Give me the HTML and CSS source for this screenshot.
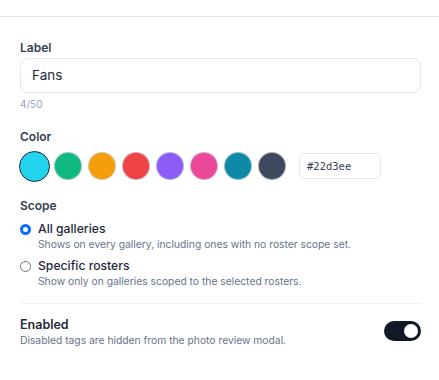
FILE: index.html
```html
<!DOCTYPE html>
<html>
<head>
<meta charset="utf-8">
<link rel="stylesheet" href="styles.css">
</head>
<body>
<div class="topbar"></div>
<div class="content">
  <div class="field">
    <div class="label">Label</div>
    <div class="input">Fans</div>
    <div class="counter">4/50</div>
  </div>

  <div class="field color-field">
    <div class="label">Color</div>
    <div class="swatch-row">
      <span class="swatch selected" style="background:#22d3ee"></span>
      <span class="swatch" style="background:#10b981"></span>
      <span class="swatch" style="background:#f59e0b"></span>
      <span class="swatch" style="background:#ef4444"></span>
      <span class="swatch" style="background:#8b5cf6"></span>
      <span class="swatch" style="background:#ec4899"></span>
      <span class="swatch" style="background:#0e89a8"></span>
      <span class="swatch" style="background:#3d4a5e"></span>
      <div class="hex">#22d3ee</div>
    </div>
  </div>

  <div class="field scope-field">
    <div class="label">Scope</div>
    <div class="radio-option">
      <span class="radio checked"></span>
      <div class="radio-text">
        <div class="radio-title">All galleries</div>
        <div class="desc">Shows on every gallery, including ones with no roster scope set.</div>
      </div>
    </div>
    <div class="radio-option">
      <span class="radio"></span>
      <div class="radio-text">
        <div class="radio-title">Specific rosters</div>
        <div class="desc">Show only on galleries scoped to the selected rosters.</div>
      </div>
    </div>
  </div>

  <div class="enabled-row">
    <div class="enabled-text">
      <div class="label enabled-label">Enabled</div>
      <div class="desc">Disabled tags are hidden from the photo review modal.</div>
    </div>
    <span class="toggle"><span class="knob"></span></span>
  </div>
</div>
</body>
</html>
```

FILE: styles.css
```css
* { box-sizing: border-box; }
body {
  margin: 0;
  background: #ffffff;
  font-family: Inter, "Noto Sans", "Liberation Sans", sans-serif;
  color: #1e293b;
  -webkit-font-smoothing: antialiased;
}
.topbar {
  height: 17px;
  border-bottom: 1px solid #e2e8f0;
}
.content {
  padding: 23px 18px 0 20px;
}
.label {
  font-size: 12px;
  font-weight: 600;
  color: #334155;
  line-height: 16px;
}
.input {
  margin-top: 2px;
  height: 35px;
  border: 1px solid #e2e8f0;
  border-radius: 8px;
  padding: 0 11px;
  font-size: 13.5px;
  line-height: 33px;
  color: #1e293b;
}
.counter {
  margin-top: 4px;
  font-size: 10px;
  color: #94a3b8;
  line-height: 14px;
}
.color-field { margin-top: 18px; }
.swatch-row {
  margin-top: 5px;
  display: flex;
  align-items: center;
  gap: 6px;
  height: 32px;
}
.swatch {
  width: 28px;
  height: 28px;
  border-radius: 50%;
  border: 1px solid rgba(203, 213, 225, 0.7);
  flex: none;
}
.swatch.selected {
  width: 31px;
  height: 31px;
  margin: 0 -1.5px;
  border: 1.5px solid #1e293b;
}
.hex {
  margin-left: 7px;
  width: 82px;
  height: 26px;
  border: 1px solid #e2e8f0;
  border-radius: 6px;
  padding: 0 7px;
  font-family: "DejaVu Sans Mono", "Liberation Mono", monospace;
  font-size: 10.5px;
  line-height: 24px;
  color: #334155;
}
.scope-field { margin-top: 16px; }
.radio-option {
  display: flex;
  gap: 7px;
  margin-top: 7px;
}
.radio-option + .radio-option { margin-top: 7px; }
.radio {
  flex: none;
  width: 11px;
  height: 11px;
  margin-top: 2.5px;
  border-radius: 50%;
  border: 1.3px solid #6b7280;
}
.radio.checked {
  border: 3.5px solid #0b6dfb;
  background: #ffffff;
}
.radio-title {
  font-size: 12.2px;
  line-height: 16px;
  color: #1e293b;
  font-weight: 500;
}
.desc {
  font-size: 10.3px;
  line-height: 14px;
  color: #64748b;
}
.enabled-row {
  margin-top: 15px;
  border-top: 1px solid #eef1f5;
  padding-top: 13px;
  display: flex;
  align-items: center;
  justify-content: space-between;
}
.enabled-label { color: #1e293b; font-size: 12.5px; }
.toggle {
  width: 37px;
  height: 20px;
  border-radius: 10px;
  background: #111827;
  position: relative;
  flex: none;
  margin-top: -3px;
}
.knob {
  position: absolute;
  right: 3px;
  top: 3px;
  width: 14px;
  height: 14px;
  border-radius: 50%;
  background: #ffffff;
}
```
